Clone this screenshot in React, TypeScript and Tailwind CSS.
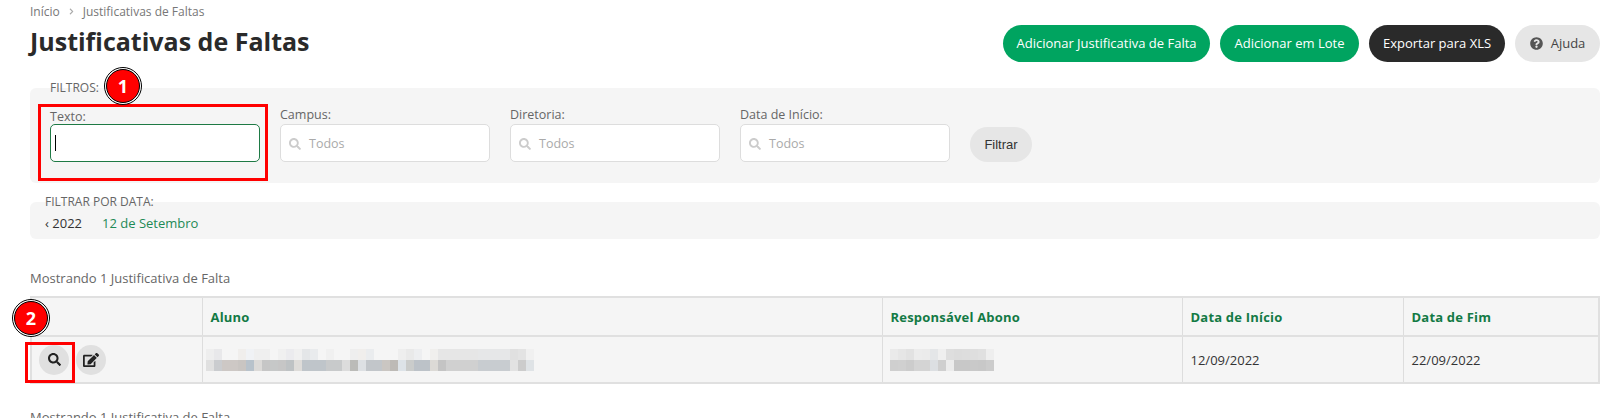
import { FaChevronRight, FaEdit, FaQuestionCircle, FaSearch } from 'react-icons/fa';

const blurRows = [
  ['#eeeeee', '#e8e8ea', '', '', '#f0eeec', '#f0f2f5', '#efefef', '#efefef', '', '#f0f0f0', '#ebebee', '#f0f0f0', '#e4e6e8', '#e9ebed', '', '#f0f0f0', '', '', '#eeeeee', '#f0eeec', '#eaecee', '', '', '', '#eeeeee', '#e9e9e9', '#edeef0', '', '#f0efed', '#e6e6e6', '#e6e6e6', '#e6e6e6', '#e6e6e6', '#e6e6e6', '#e6e7e8', '#e6e7e8', '#e6e7e8', '#e6e7e8', '#e0e0e0', '#e3e3e3', '#f0f0f0'],
  ['#e0e0e0', '#cacccf', '#cdc8c5', '#cdc8c5', '#c9c5c2', '#b8c2cb', '#dcdad8', '#c6c6c6', '#c6c8c8', '#c6c6c6', '#bec2c4', '#dedcd9', '#bfc5ca', '#bfc5ca', '#bfc5ca', '#c8cacb', '#c8cacb', '#dcdcdc', '#bbbbb8', '#dde0e3', '#c2c6ca', '#c2c6ca', '#cac6c2', '#bdbab6', '#dde3e8', '#cacccb', '#bcc2c8', '#bcc2c8', '#dcdad6', '#c4c4c4', '#d0d0d0', '#d0d0d0', '#d0d0d0', '#d0d0d0', '#c8ccd0', '#c8ccd0', '#c8ccd0', '#c8ccd0', '#e2e2e2', '#cccccc', '#dfe3e6'],
];

const blurRowsSmall = [
  ['#eaeaea', '#e6e6e6', '#e2e2e2', '#ececec', '#ebebeb', '#e4e6e8', '#efefef', '#dedede', '#dcdcdc', '#dddddd', '#dedede', '#e0e0e0', '#eeeeee'],
  ['#cfcfcf', '#d0d0d0', '#cccccc', '#d4d4d4', '#d4d4d4', '#dcdfe2', '#cfcfcf', '#ececec', '#c8c8c8', '#c8c8c8', '#c9c9c9', '#c8c8c8', '#cccccc'],
];

function Blur({ rows }: { rows: string[][] }) {
  return (
    <div className="flex flex-col">
      {rows.map((row, r) => (
        <div key={r} className="flex h-[11px]">
          {row.map((color, c) => (
            <div key={c} className="w-2 h-full" style={{ backgroundColor: color || 'transparent' }} />
          ))}
        </div>
      ))}
    </div>
  );
}

function Badge({ n, className }: { n: number; className: string }) {
  return (
    <div className={`absolute w-[38px] h-[38px] rounded-full bg-white border border-black flex items-center justify-center ${className}`}>
      <div className="w-[34px] h-[34px] rounded-full bg-[#ff0000] border border-black flex items-center justify-center text-white text-[18px] font-bold">
        {n}
      </div>
    </div>
  );
}

function SearchSelect({ label }: { label: string }) {
  return (
    <div className="w-[210px] shrink-0">
      <div className="h-[17px] text-[12.5px] leading-[17px] text-[#666]">{label}</div>
      <div className="h-[38px] mt-[1px] flex items-center gap-2 px-[8px] pt-[2px] bg-white border border-[#ddd] rounded-[5px]">
        <FaSearch className="text-[12px] text-[#ccc]" />
        <span className="text-[12.5px] text-[#aaa]">Todos</span>
      </div>
    </div>
  );
}

const headers = ['Aluno', 'Responsável Abono', 'Data de Início', 'Data de Fim'];

export default function App() {
  return (
    <div className="relative h-[418px] overflow-hidden bg-white pl-[30px] pr-[20px] font-['Open_Sans',sans-serif]">
      <div className="h-[21px] pt-[2px] flex items-center gap-[8px] text-[12px] text-[#777]">
        <span>Início</span>
        <FaChevronRight className="text-[7px] text-[#aaa]" />
        <span>Justificativas de Faltas</span>
      </div>

      <div className="flex items-start justify-between h-[67px]">
        <h1 className="text-[25px] leading-[40px] font-bold text-[#2a2a2a]">Justificativas de Faltas</h1>
        <div className="flex gap-[10px] mt-[4px] text-[13px] text-white">
          <button className="h-[37px] w-[207px] rounded-full bg-[#00a460]">Adicionar Justificativa de Falta</button>
          <button className="h-[37px] w-[139px] rounded-full bg-[#00a460]">Adicionar em Lote</button>
          <button className="h-[37px] w-[136px] rounded-full bg-[#2a2a2a]">Exportar para XLS</button>
          <button className="h-[37px] w-[85px] rounded-full bg-[#e6e6e6] text-[#444] flex items-center justify-center gap-[8px]">
            <FaQuestionCircle className="text-[13px] text-[#555]" />
            Ajuda
          </button>
        </div>
      </div>

      <section className="relative h-[95px] bg-[#f5f5f5] rounded-[6px] pl-[20px]">
        <div className="absolute left-[20px] -top-[9px] text-[12px] leading-[17px] text-[#666]">FILTROS:</div>
        <div className="flex gap-[20px] pt-[18px]">
          <div className="w-[210px] shrink-0">
            <div className="h-[17px] mt-[2px] -mb-[2px] text-[12.5px] leading-[17px] text-[#666]">Texto:</div>
            <div className="h-[38px] mt-[1px] flex items-center px-[4px] bg-white border border-[#1e7a45] rounded-[5px]">
              <div className="w-px h-[16px] bg-black" />
            </div>
          </div>
          <SearchSelect label="Campus:" />
          <SearchSelect label="Diretoria:" />
          <SearchSelect label="Data de Início:" />
          <button className="mt-[21px] h-[35px] w-[62px] rounded-full bg-[#e6e6e6] text-[13px] text-[#333] font-['Liberation_Sans',sans-serif]">
            Filtrar
          </button>
        </div>
      </section>

      <section className="relative h-[37px] mt-[19px] bg-[#f5f5f5] rounded-[6px] pl-[15px] flex items-center gap-[20px] pt-[6px] text-[13px]">
        <div className="absolute left-[15px] -top-[9px] text-[12px] leading-[17px] text-[#666]">FILTRAR POR DATA:</div>
        <span className="text-[#333]">‹ 2022</span>
        <span className="text-[#1e8a55]">12 de Setembro</span>
      </section>

      <p className="mt-[30px] h-[27px] text-[13px] leading-[18px] text-[#666]">Mostrando 1 Justificativa de Falta</p>

      <table className="w-full table-fixed border-collapse border-2 border-[#e0e0e0] bg-[#f5f5f5] text-left">
        <colgroup>
          <col className="w-[171px]" />
          <col className="w-[680px]" />
          <col className="w-[300px]" />
          <col className="w-[221px]" />
          <col />
        </colgroup>
        <thead>
          <tr className="h-[39px] border-b-2 border-[#e0e0e0]">
            <th className="border-r border-[#ddd]" />
            {headers.map((h) => (
              <th key={h} className="border-r border-[#ddd] px-[8px] pt-[2px] text-[13px] font-bold tracking-[0.2px] text-[#137a45]">
                {h}
              </th>
            ))}
          </tr>
        </thead>
        <tbody>
          <tr className="h-[47px]">
            <td className="border-r border-[#ddd] pl-[7px]">
              <div className="flex gap-[7px]">
                <button className="w-[30px] h-[30px] rounded-full bg-[#e0e0e0] flex items-center justify-center">
                  <FaSearch className="text-[13px] text-[#222]" />
                </button>
                <button className="w-[30px] h-[30px] rounded-full bg-[#e0e0e0] flex items-center justify-center">
                  <FaEdit className="text-[16px] text-[#222]" />
                </button>
              </div>
            </td>
            <td className="border-r border-[#ddd] pl-[3px]">
              <Blur rows={blurRows} />
            </td>
            <td className="border-r border-[#ddd] pl-[7px] pt-[1px]">
              <Blur rows={blurRowsSmall} />
            </td>
            <td className="border-r border-[#ddd] px-[8px] pt-[3px] text-[13px] text-[#333]">12/09/2022</td>
            <td className="px-[8px] pt-[3px] text-[13px] text-[#333]">22/09/2022</td>
          </tr>
        </tbody>
      </table>

      <p className="mt-[24px] text-[13px] leading-[18px] text-[#666]">Mostrando 1 Justificativa de Falta</p>

      {/* annotations drawn over the screenshot */}
      <div className="absolute left-[38px] top-[104px] w-[230px] h-[77px] border-[3px] border-[#ff0000]" />
      <Badge n={1} className="left-[104px] top-[67px]" />
      <div className="absolute left-[25px] top-[342px] w-[50px] h-[41px] border-[3px] border-[#ff0000]" />
      <Badge n={2} className="left-[12px] top-[299px]" />
    </div>
  );
}
